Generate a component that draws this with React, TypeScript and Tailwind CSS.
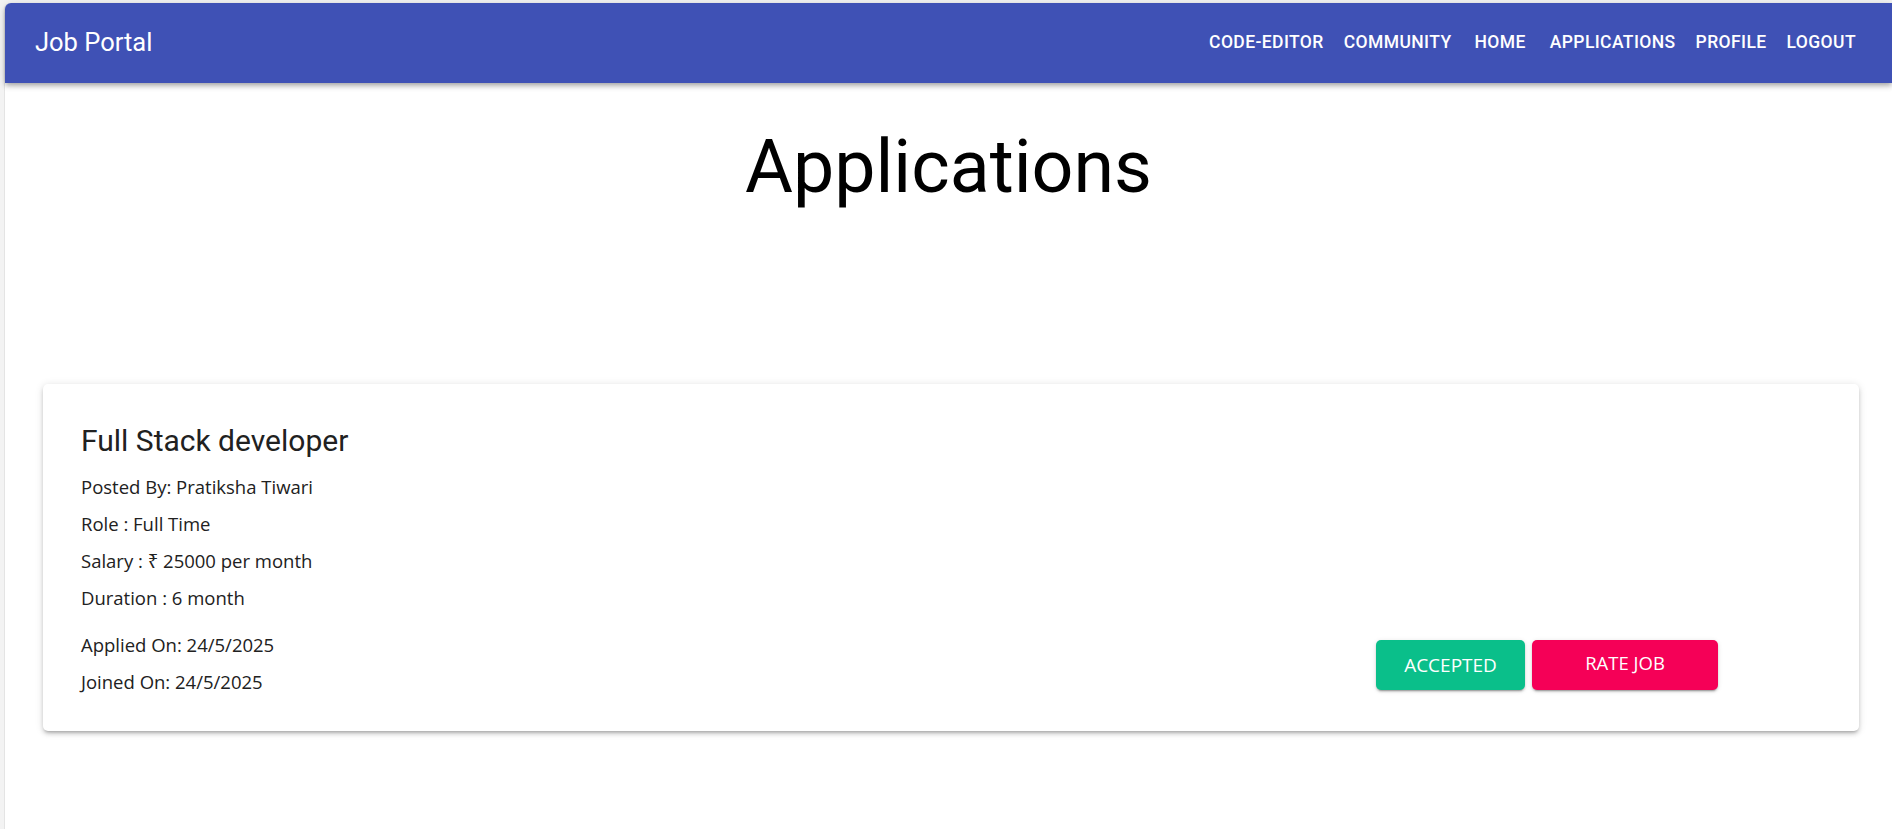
import React from 'react'

const navItems = ['Code-Editor', 'Community', 'Home', 'Applications', 'Profile', 'Logout']

const bodyFont = { fontFamily: '"Open Sans", "Noto Sans", sans-serif' }

function NavBar() {
  return (
    <header
      className="flex h-[80px] items-center bg-[#3f51b5] pl-[30px] pr-[26px] text-white rounded-tl-[6px] shadow-[0_2px_4px_-1px_rgba(0,0,0,0.2),0_4px_5px_0_rgba(0,0,0,0.14),0_1px_10px_0_rgba(0,0,0,0.12)] relative z-10"
      style={{ fontFamily: 'Roboto, sans-serif' }}
    >
      <h1 className="flex-1 text-[25.5px] font-normal leading-none">Job Portal</h1>
      <nav className="flex items-center">
        {navItems.map((item, i) => (
          <button
            key={item}
            className={`px-[10px] py-[8px] text-[17.5px] font-medium uppercase tracking-[0.4px] leading-none ${
              i === 2 ? 'ml-[3px]' : i === 3 ? 'ml-[4px]' : ''
            }`}
          >
            {item}
          </button>
        ))}
      </nav>
    </header>
  )
}

function ApplicationCard() {
  return (
    <div className="ml-[38px] mr-[33px] mt-[172px] rounded-[5px] bg-white pl-[38px] pr-[38px] pt-[37px] pb-[31px] text-[#212121] shadow-[0_3px_3px_-2px_rgba(0,0,0,0.2),0_3px_4px_0_rgba(0,0,0,0.14),0_1px_8px_0_rgba(0,0,0,0.12)]">
      <h3 className="text-[30px] leading-[40px] font-normal" style={{ fontFamily: 'Roboto, sans-serif' }}>
        Full Stack developer
      </h3>
      <div className="mt-[7px] text-[18.5px] leading-[37px]" style={bodyFont}>
        <p>Posted By: Pratiksha Tiwari</p>
        <p>Role : Full Time</p>
        <p>Salary : ₹ 25000 per month</p>
        <p>Duration : 6 month</p>
      </div>
      <div className="mt-[10px] flex items-end justify-between" style={bodyFont}>
        <div className="text-[18.5px] leading-[37px]">
          <p>Applied On: 24/5/2025</p>
          <p>Joined On: 24/5/2025</p>
        </div>
        <div className="mb-[10px] mr-[103px] flex gap-[7px]">
          <button className="flex h-[50px] w-[149px] items-center justify-center rounded-[5px] bg-[#0abf8a] text-[19px] text-white uppercase shadow-[0_3px_1px_-2px_rgba(0,0,0,0.2),0_2px_2px_0_rgba(0,0,0,0.14),0_1px_5px_0_rgba(0,0,0,0.12)]">
            Accepted
          </button>
          <button className="flex h-[50px] w-[186px] items-center justify-center rounded-[5px] bg-[#f50057] pb-[4px] text-[18.5px] text-white uppercase shadow-[0_3px_1px_-2px_rgba(0,0,0,0.2),0_2px_2px_0_rgba(0,0,0,0.14),0_1px_5px_0_rgba(0,0,0,0.12)]">
            Rate Job
          </button>
        </div>
      </div>
    </div>
  )
}

export default function App() {
  return (
    <div className="h-[829px] overflow-hidden bg-[#f3f3f3] pl-[4px] pt-[3px]">
      <div className="h-full border-l border-[#e4e4e4] bg-white rounded-tl-[6px]">
        <NavBar />
        <main>
          <h2
            className="mt-[39px] text-center text-[73.5px] leading-[90px] font-normal text-black"
            style={{ fontFamily: 'Roboto, sans-serif' }}
          >
            Applications
          </h2>
          <ApplicationCard />
        </main>
      </div>
    </div>
  )
}
